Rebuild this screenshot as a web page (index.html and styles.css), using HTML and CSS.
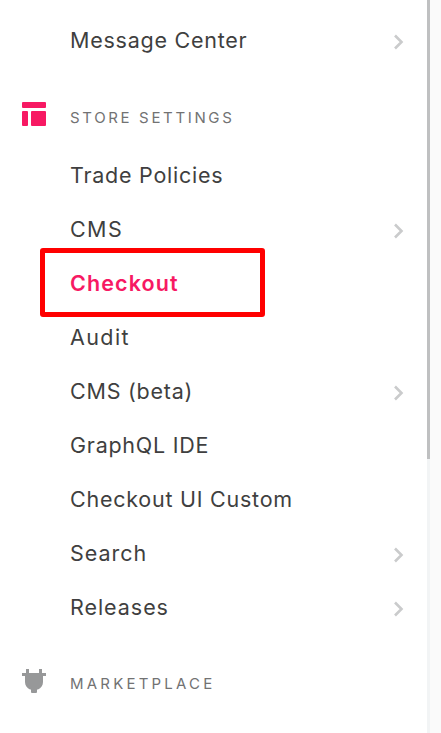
FILE: index.html
```html
<!DOCTYPE html>
<html lang="en">
<head>
<meta charset="utf-8">
<title>Store settings</title>
<link rel="stylesheet" href="styles.css">
</head>
<body>
<svg class="defs" width="0" height="0"><symbol id="chevron" viewBox="0 0 12 18"><path d="M2 2.500 8.500 9 2 15.500" fill="none" stroke="currentColor" stroke-width="2.600"/></symbol></svg>
<div class="page">
<nav class="sidebar">
  <a class="item"><span class="message">Message Center</span><svg class="chevron"><use href="#chevron"/></svg></a>
  <div class="heading">
    <svg class="icon store" viewBox="0 0 24 24"><rect width="24" height="6" rx="1"/><rect y="9" width="6" height="15" rx="1"/><rect x="9" y="9" width="15" height="15" rx="1"/></svg>
    <span class="store-title">STORE SETTINGS</span>
  </div>
  <a class="item"><span class="trade">Trade Policies</span></a>
  <a class="item"><span class="cms">CMS</span><svg class="chevron"><use href="#chevron"/></svg></a>
  <a class="item active"><span class="checkout">Checkout</span></a>
  <a class="item"><span class="audit">Audit</span></a>
  <a class="item"><span class="beta">CMS (beta)</span><svg class="chevron"><use href="#chevron"/></svg></a>
  <a class="item"><span class="graphql">GraphQL IDE</span></a>
  <a class="item"><span class="custom">Checkout UI Custom</span></a>
  <a class="item"><span class="search">Search</span><svg class="chevron"><use href="#chevron"/></svg></a>
  <a class="item"><span class="releases">Releases</span><svg class="chevron"><use href="#chevron"/></svg></a>
  <div class="heading">
    <svg class="icon market" viewBox="0 0 24 24"><path d="M4 0h3v4h10V0h3v4h4v3h-3v6c0 3.500-2 6-5 7.500h-1V23q0 1-1 1h-4q-1 0-1-1v-2.500H8c-3-1.500-5-4-5-7.500V7H0V4h4z"/></svg>
    <span class="market-title">MARKETPLACE</span>
  </div>
</nav>
<div class="scroll"><div class="thumb"></div></div>
<div class="edge"></div>
</div>
</body>
</html>
```

FILE: styles.css
```css
body { margin: 0; background: #fff; font-family: Inter, "Liberation Sans", sans-serif; color: #3f3f40; }
.defs { position: absolute; }
.page { display: flex; height: 733px; overflow: hidden; }
.sidebar { flex: 1; padding-top: 14px; }
.item { display: flex; align-items: center; justify-content: space-between; height: 54px; padding: 0 22px 0 70px; font-size: 21.5px; line-height: 26px; letter-spacing: 0.75px; position: relative; white-space: nowrap; }
.item span { margin-top: -3px; }
.item .cms, .item .audit { letter-spacing: 1.4px; }
.item .checkout { letter-spacing: 1.1px; }
.item .search, .item .releases { letter-spacing: 0.95px; }
.chevron { width: 12px; height: 18px; color: #cacbcc; margin-top: 2px; }
.heading { display: flex; align-items: center; height: 81px; padding-left: 22px; gap: 24px; box-sizing: border-box; padding-top: 17px; font-size: 15px; line-height: 18px; color: #727273; }
.store-title { letter-spacing: 2.65px; margin-top: 1px; }
.market-title { letter-spacing: 3.2px; margin-top: -1px; }
.icon { width: 24px; height: 24px; margin-top: -6px; }
.store { fill: #f71963; }
.market { fill: #979899; }
.active { color: #f71963; font-weight: 600; }
.active::after { content: ""; position: absolute; left: 40px; top: -9px; width: 215px; height: 59px; border: 5px solid #f00; border-radius: 3px; }
.scroll { width: 3px; background: #f2f4f5; }
.thumb { height: 459px; background: #bfc0c1; }
.edge { width: 11px; background: #fafafa; }
```
